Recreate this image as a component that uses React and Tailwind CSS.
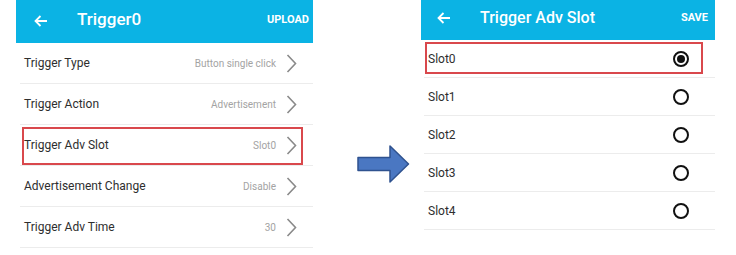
import React from "react";

const font = { fontFamily: "Roboto, 'Liberation Sans', sans-serif" };

const settings = [
    { label: "Trigger Type", value: "Button single click" },
    { label: "Trigger Action", value: "Advertisement" },
    { label: "Trigger Adv Slot", value: "Slot0", marked: true },
    { label: "Advertisement Change", value: "Disable" },
    { label: "Trigger Adv Time", value: "30" },
];

const slots = ["Slot0", "Slot1", "Slot2", "Slot3", "Slot4"];

function BackArrow() {
    return (
        <svg width="14" height="12" viewBox="0 0 14 12" fill="none" stroke="white" strokeWidth="1.8">
            <path d="M13 6H1.5M6.5 1L1.5 6l5 5" />
        </svg>
    );
}

function Chevron() {
    return (
        <svg width="11" height="19" viewBox="0 0 11 19" fill="none" stroke="#8a8a8a" strokeWidth="1.6">
            <path d="M1.5 1l8 8.5-8 8.5" />
        </svg>
    );
}

function Radio({ checked }) {
    return (
        <div className="flex h-[16px] w-[16px] items-center justify-center rounded-full border-[2px] border-[#111]">
            {checked && <div className="h-[8px] w-[8px] rounded-full bg-[#111]" />}
        </div>
    );
}

export default function App() {
    return (
        <div className="flex h-[255px] w-[736px] items-start bg-white" style={font}>
            <div className="ml-[16px] w-[297px]">
                <div className="flex h-[43px] items-center bg-[#0bb3e4] pr-[4px] text-white">
                    <div className="ml-[18px] mt-[-2px]"><BackArrow /></div>
                    <p className="ml-[29px] mt-[-3px] text-[17px] font-medium">Trigger0</p>
                    <p className="ml-auto mt-[-3px] text-[11px] font-bold">UPLOAD</p>
                </div>
                {settings.map((item) => (
                    <div key={item.label} className="relative ml-[4px] flex h-[41px] items-center border-b border-b-[#ececec] pl-[4px] pr-[16px]">
                        <p className="text-[12px] text-[#2e2e2e]">{item.label}</p>
                        <p className="ml-auto text-[10px] text-[#a3a3a3]">{item.value}</p>
                        <div className="ml-[10px]"><Chevron /></div>
                        {item.marked && (
                            <div className="absolute left-[2px] top-[2px] h-[38px] w-[281px] border-[2px] border-[#d9484c]" />
                        )}
                    </div>
                ))}
            </div>

            <svg className="ml-[44px] mt-[145px]" width="53" height="38" viewBox="0 0 53 38">
                <path d="M1 12.5h32V1l18.5 18-18.5 18V25.5H1z" fill="#4a77c2" stroke="#2f528f" strokeWidth="1.5" strokeLinejoin="round" />
            </svg>

            <div className="ml-[11px] w-[294px]">
                <div className="flex h-[40px] items-center bg-[#0bb3e4] pr-[7px] text-white">
                    <div className="ml-[16px] mt-[-4px]"><BackArrow /></div>
                    <p className="ml-[29px] mt-[-4px] text-[16px] font-medium">Trigger Adv Slot</p>
                    <p className="ml-auto mt-[-4px] text-[11px] font-bold">SAVE</p>
                </div>
                {slots.map((slot, i) => (
                    <div key={slot} className="relative ml-[3px] flex h-[38px] items-center border-b border-b-[#ececec] pl-[4px] pr-[26px]">
                        <p className="text-[12px] text-[#2e2e2e]">{slot}</p>
                        <div className="ml-auto"><Radio checked={i === 0} /></div>
                        {i === 0 && (
                            <div className="absolute left-[1px] top-[2px] h-[32px] w-[278px] border-[2px] border-[#d9484c]" />
                        )}
                    </div>
                ))}
            </div>
        </div>
    );
}
